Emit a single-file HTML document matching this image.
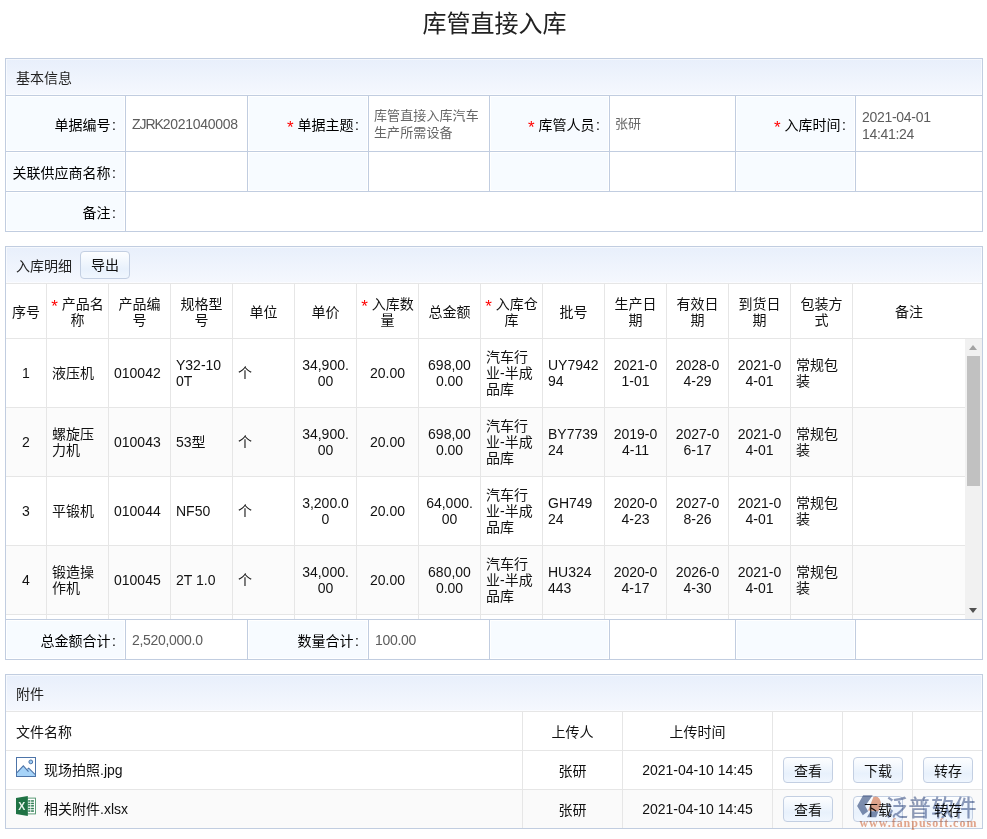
<!DOCTYPE html>
<html lang="zh-CN">
<head>
<meta charset="utf-8">
<title>库管直接入库</title>
<style>
*{box-sizing:border-box;}
html,body{margin:0;padding:0;background:#fff;}
body{width:987px;height:839px;position:relative;overflow:hidden;font-family:"Liberation Sans","Noto Sans CJK SC",sans-serif;font-size:14px;color:#222;}
.title{position:absolute;left:1px;top:6px;width:987px;text-align:center;font-size:24px;line-height:36px;color:#222;}
.panel{position:absolute;left:5px;width:978px;border:1px solid #c1cde0;background:#fff;}
.phead{position:relative;height:37px;border-bottom:1px solid #c1cde0;background:linear-gradient(#e8effb,#f5f8fe);line-height:39px;overflow:hidden;padding-left:10px;font-size:14px;color:#222;white-space:nowrap;}
table{border-collapse:separate;border-spacing:0;table-layout:fixed;}
td,th{padding:0;font-weight:normal;}
/* form table */
.form{width:976px;}
.form td{border-right:1px solid #c1cde0;border-bottom:1px solid #c1cde0;vertical-align:middle;}
.form td:last-child{border-right:0;}
.form tr:last-child td{border-bottom:0;}
.form td.l{background:#f7fbff;text-align:right;padding-right:9px;font-size:14px;color:#000;white-space:nowrap;}
.form td.l u{text-decoration:none;margin-left:1.5px;}
.form td.v{background:#fff;text-align:left;padding-left:6px;font-size:13px;line-height:17px;color:#666;letter-spacing:0.1px;}
.star{color:#f00;}
.phead.g{border-bottom-color:#e6e6e6;}
.phead{box-shadow:inset 0 0 0 1px rgba(255,255,255,.55);}
.form td.l{box-shadow:inset 0 0 0 1px #fff;}
.form td.c{padding-left:5px;}
.form td.n{font-size:14px;letter-spacing:-0.3px;padding-top:1px;color:#5c5c5c;}
.form td.n s{text-decoration:none;letter-spacing:-1.05px;}
.star{font-size:17px;line-height:10px;position:relative;top:3px;}
/* grid */
.grid{width:976px;}
.grid th,.grid td{border-right:1px solid #e6e6e6;border-bottom:1px solid #e6e6e6;line-height:16px;font-size:14px;color:#111;vertical-align:middle;white-space:nowrap;}
.grid th{height:55px;text-align:center;background:#fff;padding-top:2px;}
.grid td{height:69px;text-align:center;}
.grid td.a{text-align:left;padding-left:5px;}
.grid tr.e td{background:#fbfbfb;}
.gbody{position:absolute;left:0;top:92px;width:976px;height:280px;overflow:hidden;}
.sb{position:absolute;left:959px;top:0;width:17px;height:280px;background:#f1f1f1;}
.sb i{position:absolute;left:2px;top:17px;width:13px;height:130px;background:#c1c1c1;}
.sb b{position:absolute;left:4px;width:0;height:0;border-left:4.5px solid transparent;border-right:4.5px solid transparent;}
.sb b.u{top:6px;border-bottom:5px solid #a3a3a3;}
.sb b.d{top:269px;border-top:5px solid #505050;}
.btn{display:inline-block;width:50px;height:26px;border:1px solid #c3cfe2;border-radius:4px;background:linear-gradient(#fdfeff 0%,#e8f1fc 65%,#f0f6fe 100%);text-align:center;line-height:26px;font-size:14px;color:#111;}
/* files */
.files{width:976px;}
.files td{height:39px;border-right:1px solid #e6e6e6;border-bottom:1px solid #e6e6e6;text-align:center;font-size:14px;color:#111;vertical-align:middle;white-space:nowrap;}
.files td:last-child{border-right:0;}
.files tr:last-child td{border-bottom:0;height:38px;}
.files td.a{text-align:left;padding-left:10px;}
.files tr.e td{background:#fafafa;}
.files .btn{margin-left:1px;vertical-align:middle;}
.ico{display:inline-block;vertical-align:middle;width:20px;height:20px;margin-right:8px;position:relative;top:-4px;}
.wm{position:absolute;left:856px;top:793px;width:124px;height:38px;mix-blend-mode:multiply;pointer-events:none;}
</style>
</head>
<body>
<div class="title">库管直接入库</div>

<div class="panel" style="top:58px;height:174px;">
  <div class="phead">基本信息</div>
  <table class="form">
    <colgroup><col style="width:120px"><col style="width:122px"><col style="width:121px"><col style="width:121px"><col style="width:120px"><col style="width:126px"><col style="width:120px"><col style="width:126px"></colgroup>
    <tr style="height:56px">
      <td class="l">单据编号<u>:</u></td><td class="v n"><s>ZJRK</s>2021040008</td>
      <td class="l"><span class="star">*</span> 单据主题<u>:</u></td><td class="v c">库管直接入库汽车<br>生产所需设备</td>
      <td class="l"><span class="star">*</span> 库管人员<u>:</u></td><td class="v c">张研</td>
      <td class="l"><span class="star">*</span> 入库时间<u>:</u></td><td class="v n" style="padding-top:4px">2021-04-01<br>14:41:24</td>
    </tr>
    <tr style="height:40px">
      <td class="l">关联供应商名称<u>:</u></td><td class="v"></td>
      <td class="l"></td><td class="v"></td>
      <td class="l"></td><td class="v"></td>
      <td class="l"></td><td class="v"></td>
    </tr>
    <tr style="height:39px">
      <td class="l">备注<u>:</u></td><td class="v" colspan="7"></td>
    </tr>
  </table>
</div>

<div class="panel" style="top:246px;height:414px;">
  <div class="phead g">入库明细<span class="btn" style="position:absolute;left:74px;top:4px;height:28px;line-height:27px;">导出</span></div>
  <table class="grid">
    <colgroup><col style="width:41px"><col style="width:62px"><col style="width:62px"><col style="width:62px"><col style="width:62px"><col style="width:62px"><col style="width:62px"><col style="width:62px"><col style="width:62px"><col style="width:62px"><col style="width:62px"><col style="width:62px"><col style="width:62px"><col style="width:62px"><col style="width:129px"></colgroup>
    <tr>
      <th>序号</th>
      <th><span class="star">*</span> 产品名<br>称</th>
      <th>产品编<br>号</th>
      <th>规格型<br>号</th>
      <th>单位</th>
      <th>单价</th>
      <th><span class="star">*</span> 入库数<br>量</th>
      <th>总金额</th>
      <th><span class="star">*</span> 入库仓<br>库</th>
      <th>批号</th>
      <th>生产日<br>期</th>
      <th>有效日<br>期</th>
      <th>到货日<br>期</th>
      <th>包装方<br>式</th>
      <th style="border-right:0;padding-right:17px;">备注</th>
    </tr>
  </table>
  <div class="gbody">
    <table class="grid">
      <colgroup><col style="width:41px"><col style="width:62px"><col style="width:62px"><col style="width:62px"><col style="width:62px"><col style="width:62px"><col style="width:62px"><col style="width:62px"><col style="width:62px"><col style="width:62px"><col style="width:62px"><col style="width:62px"><col style="width:62px"><col style="width:62px"><col style="width:112px"><col style="width:17px"></colgroup>
      <tr>
        <td>1</td><td class="a">液压机</td><td class="a">010042</td><td class="a">Y32-10<br>0T</td><td class="a">个</td><td>34,900.<br>00</td><td>20.00</td><td>698,00<br>0.00</td><td class="a">汽车行<br>业-半成<br>品库</td><td class="a">UY7942<br>94</td><td>2021-0<br>1-01</td><td>2028-0<br>4-29</td><td>2021-0<br>4-01</td><td class="a">常规包<br>装</td><td style="border-right:0"></td><td style="border:0"></td>
      </tr>
      <tr class="e">
        <td>2</td><td class="a">螺旋压<br>力机</td><td class="a">010043</td><td class="a">53型</td><td class="a">个</td><td>34,900.<br>00</td><td>20.00</td><td>698,00<br>0.00</td><td class="a">汽车行<br>业-半成<br>品库</td><td class="a">BY7739<br>24</td><td>2019-0<br>4-11</td><td>2027-0<br>6-17</td><td>2021-0<br>4-01</td><td class="a">常规包<br>装</td><td style="border-right:0"></td><td style="border:0"></td>
      </tr>
      <tr>
        <td>3</td><td class="a">平锻机</td><td class="a">010044</td><td class="a">NF50</td><td class="a">个</td><td>3,200.0<br>0</td><td>20.00</td><td>64,000.<br>00</td><td class="a">汽车行<br>业-半成<br>品库</td><td class="a">GH749<br>24</td><td>2020-0<br>4-23</td><td>2027-0<br>8-26</td><td>2021-0<br>4-01</td><td class="a">常规包<br>装</td><td style="border-right:0"></td><td style="border:0"></td>
      </tr>
      <tr class="e">
        <td>4</td><td class="a">锻造操<br>作机</td><td class="a">010045</td><td class="a">2T 1.0</td><td class="a">个</td><td>34,000.<br>00</td><td>20.00</td><td>680,00<br>0.00</td><td class="a">汽车行<br>业-半成<br>品库</td><td class="a">HU324<br>443</td><td>2020-0<br>4-17</td><td>2026-0<br>4-30</td><td>2021-0<br>4-01</td><td class="a">常规包<br>装</td><td style="border-right:0"></td><td style="border:0"></td>
      </tr>
      <tr>
        <td></td><td></td><td></td><td></td><td></td><td></td><td></td><td></td><td></td><td></td><td></td><td></td><td></td><td></td><td style="border-right:0"></td><td style="border:0"></td>
      </tr>
    </table>
    <div class="sb"><b class="u"></b><i></i><b class="d"></b></div>
  </div>
  <table class="form" style="position:absolute;left:0;top:372px;border-top:1px solid #c1cde0;">
    <colgroup><col style="width:120px"><col style="width:122px"><col style="width:121px"><col style="width:121px"><col style="width:120px"><col style="width:126px"><col style="width:120px"><col style="width:126px"></colgroup>
    <tr style="height:39px">
      <td class="l">总金额合计<u>:</u></td><td class="v n">2,520,000.0</td>
      <td class="l">数量合计<u>:</u></td><td class="v n">100.00</td>
      <td class="l"></td><td class="v"></td>
      <td class="l"></td><td class="v"></td>
    </tr>
  </table>
</div>

<div class="panel" style="top:674px;height:155px;">
  <div class="phead g">附件</div>
  <table class="files">
    <colgroup><col style="width:517px"><col style="width:100px"><col style="width:150px"><col style="width:70px"><col style="width:70px"><col style="width:69px"></colgroup>
    <tr><td class="a">文件名称</td><td>上传人</td><td>上传时间</td><td></td><td></td><td></td></tr>
    <tr>
      <td class="a"><svg class="ico" viewBox="0 0 20 20"><rect x="0.5" y="0.5" width="19" height="19" fill="#fff" stroke="#4d74a8"/><path d="M1 15.6 L7.3 8.9 L10.6 12.6 L12.6 11.2 L19 17.4 V19 H1 Z" fill="#a6d3f8"/><path d="M1 15.6 L7.3 8.9 L12.5 14.7 M11.6 12 L12.7 11.2 L19 17.4" fill="none" stroke="#4d74a8" stroke-width="1.1" stroke-linejoin="miter"/><circle cx="14.8" cy="4.9" r="1.9" fill="#9fcdf5" stroke="#4d74a8" stroke-width="1"/></svg>现场拍照.jpg</td>
      <td>张研</td><td>2021-04-10 14:45</td>
      <td><span class="btn">查看</span></td><td><span class="btn">下载</span></td><td><span class="btn">转存</span></td>
    </tr>
    <tr class="e">
      <td class="a"><svg class="ico" viewBox="0 0 20 20"><rect x="11" y="2.1" width="8.5" height="15.8" fill="#fff" stroke="#4a9068" stroke-width="0.9"/><g fill="#2d7d52"><rect x="12.2" y="4.2" width="2.2" height="1.5"/><rect x="15.1" y="4.2" width="2.8" height="1.5"/><rect x="12.2" y="6.7" width="2.2" height="1.5"/><rect x="15.1" y="6.7" width="2.8" height="1.5"/><rect x="12.2" y="9.1" width="2.2" height="1.5"/><rect x="15.1" y="9.1" width="2.8" height="1.5"/><rect x="12.2" y="11.8" width="2.2" height="1.5"/><rect x="15.1" y="11.8" width="2.8" height="1.5"/><rect x="12.2" y="14.3" width="2.2" height="1.5"/><rect x="15.1" y="14.3" width="2.8" height="1.5"/></g><path d="M0 2 L11.8 0 V20 L0 18 Z" fill="#1f7244"/><text x="5.7" y="13.9" font-size="10.5" font-weight="bold" fill="#e8f3ec" text-anchor="middle" font-family="Liberation Sans, sans-serif">X</text></svg>相关附件.xlsx</td>
      <td>张研</td><td>2021-04-10 14:45</td>
      <td><span class="btn">查看</span></td><td><span class="btn">下载</span></td><td><span class="btn">转存</span></td>
    </tr>
  </table>
</div>

<svg class="wm" viewBox="0 0 124 38">
  <path d="M1.1 13 L7.1 2.3 H16.7 L9.2 13 L12.1 18.3 L6.8 22.2 Z" fill="#8190ae"/>
  <path d="M11 24.3 L14.6 18.3 H22.4 L20.2 24.3 Z" fill="#8190ae"/>
  <path d="M17.4 4.1 Q21 2.3 23.6 6 Q26.8 11.5 22.4 18.3 L12.1 17.6 Z" fill="#e5a58b"/>
  <text x="29.5" y="22.5" font-size="22.5" font-weight="500" fill="#8f9cba" font-family="Liberation Sans, Noto Sans CJK SC, sans-serif" textLength="91" lengthAdjust="spacing">泛普软件</text>
  <text x="3.4" y="33.8" font-size="12" font-weight="bold" fill="#e6a88e" font-family="Liberation Serif, serif" textLength="117" lengthAdjust="spacing">www.fanpusoft.com</text>
</svg>
</body>
</html>
